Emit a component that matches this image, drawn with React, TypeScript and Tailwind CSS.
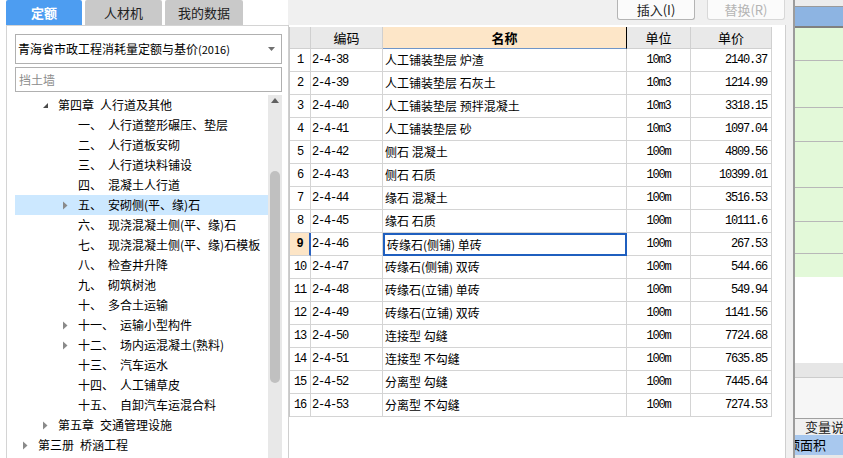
import React from "react";

const cjk = "font-['Noto_Sans_CJK_SC','Noto_Sans',sans-serif]";
const mono = "font-['Liberation_Mono','Noto_Sans_CJK_SC',monospace] tracking-[-1.2px]";

interface TreeNode {
  label: string;
  name?: string;
  level: number;
  arrow?: "open" | "closed";
  selected?: boolean;
}

const tree: TreeNode[] = [
  { label: "第四章", name: "人行道及其他", level: 1, arrow: "open" },
  { label: "一、", name: "人行道整形碾压、垫层", level: 2 },
  { label: "二、", name: "人行道板安砌", level: 2 },
  { label: "三、", name: "人行道块料铺设", level: 2 },
  { label: "四、", name: "混凝土人行道", level: 2 },
  { label: "五、", name: "安砌侧(平、缘)石", level: 2, arrow: "closed", selected: true },
  { label: "六、", name: "现浇混凝土侧(平、缘)石", level: 2 },
  { label: "七、", name: "现浇混凝土侧(平、缘)石模板", level: 2 },
  { label: "八、", name: "检查井升降", level: 2 },
  { label: "九、", name: "砌筑树池", level: 2 },
  { label: "十、", name: "多合土运输", level: 2 },
  { label: "十一、", name: "运输小型构件", level: 2, arrow: "closed" },
  { label: "十二、", name: "场内运混凝土(熟料)", level: 2, arrow: "closed" },
  { label: "十三、", name: "汽车运水", level: 2 },
  { label: "十四、", name: "人工铺草皮", level: 2 },
  { label: "十五、", name: "自卸汽车运混合料", level: 2 },
  { label: "第五章", name: "交通管理设施", level: 1, arrow: "closed" },
  { label: "第三册", name: "桥涵工程", level: 0, arrow: "closed" },
];

const rows: [string, string, string, string][] = [
  ["2-4-38", "人工铺装垫层 炉渣", "10m3", "2140.37"],
  ["2-4-39", "人工铺装垫层 石灰土", "10m3", "1214.99"],
  ["2-4-40", "人工铺装垫层 预拌混凝土", "10m3", "3318.15"],
  ["2-4-41", "人工铺装垫层 砂", "10m3", "1097.04"],
  ["2-4-42", "侧石 混凝土", "100m", "4809.56"],
  ["2-4-43", "侧石 石质", "100m", "10399.01"],
  ["2-4-44", "缘石 混凝土", "100m", "3516.53"],
  ["2-4-45", "缘石 石质", "100m", "10111.6"],
  ["2-4-46", "砖缘石(侧铺) 单砖", "100m", "267.53"],
  ["2-4-47", "砖缘石(侧铺) 双砖", "100m", "544.66"],
  ["2-4-48", "砖缘石(立铺) 单砖", "100m", "549.94"],
  ["2-4-49", "砖缘石(立铺) 双砖", "100m", "1141.56"],
  ["2-4-50", "连接型 勾缝", "100m", "7724.68"],
  ["2-4-51", "连接型 不勾缝", "100m", "7635.85"],
  ["2-4-52", "分离型 勾缝", "100m", "7445.64"],
  ["2-4-53", "分离型 不勾缝", "100m", "7274.53"],
];

function Arrow({ kind }: { kind?: "open" | "closed" }) {
  if (kind === "open")
    return (
      <svg width="7" height="7" viewBox="0 0 7 7">
        <polygon points="6,1 6,6 1,6" fill="#4a4a4a" />
      </svg>
    );
  if (kind === "closed")
    return (
      <svg width="7" height="9" viewBox="0 0 7 9">
        <polygon points="1,0.5 5.5,4.5 1,8.5" fill="#8a8a8a" />
      </svg>
    );
  return null;
}

function TreeRow({ node }: { node: TreeNode }) {
  const indent = [0, 20, 40][node.level];
  return (
    <div className={`h-[20px] flex items-center ${node.selected ? "bg-[#cce8ff]" : ""}`}>
      <div style={{ width: indent }} className="shrink-0" />
      <div className="w-[23px] shrink-0 flex items-center pl-[7px]">
        <Arrow kind={node.arrow} />
      </div>
      <span className="whitespace-nowrap">{node.label}</span>
      <span className="ml-[6px] whitespace-nowrap">{node.name}</span>
    </div>
  );
}

function LeftPanel() {
  return (
    <div className="w-[288px] h-full flex flex-col shrink-0">
      {/* tabs */}
      <div className="h-[25px] flex pl-[6px] gap-[3px] shrink-0">
        <div className="w-[76px] bg-[#4d9df1] text-white font-bold text-[13px] flex items-center justify-center rounded-t-[2px]">定额</div>
        <div className="w-[77px] bg-[#c9c9c9] text-[#222] text-[13px] flex items-center justify-center rounded-t-[2px]">人材机</div>
        <div className="w-[78px] bg-[#c9c9c9] text-[#222] text-[13px] flex items-center justify-center rounded-t-[2px]">我的数据</div>
      </div>
      <div className="flex-1 ml-[6px] border-l border-t border-[#d4d4d4] flex flex-col min-h-0">
        <div className="mt-[8px] ml-[8px] w-[267px] h-[30px] border border-[#b0b0b0] flex items-center pl-[2px] pr-[6px] text-[12px] text-black">
          <span className="flex-1 whitespace-nowrap">青海省市政工程消耗量定额与基价<span className="text-[11px]">(2016)</span></span>
          <svg width="7" height="4" viewBox="0 0 7 4">
            <polygon points="0,0 7,0 3.5,4" fill="#707070" />
          </svg>
        </div>
        <div className="mt-[3px] ml-[8px] w-[267px] h-[25px] border border-[#b0b0b0] flex items-center pl-[3px] text-[12px] text-[#8c8c8c]">挡土墙</div>
        <div className="mt-[3px] flex flex-1 min-h-0 pl-[8px]">
          <div className="w-[253px] text-[12px] text-black">
            {tree.map((n, i) => (
              <TreeRow key={i} node={n} />
            ))}
          </div>
          <div className="w-[14px] bg-[#e8e8e8] flex flex-col items-center">
            <svg width="8" height="6" viewBox="0 0 8 6" className="mt-[3px]">
              <polygon points="4,0 8,5 0,5" fill="#606060" />
            </svg>
            <div className="mt-[67px] w-[10px] h-[212px] rounded-full bg-[#c0c0c0]" />
          </div>
        </div>
      </div>
    </div>
  );
}

const cols = "grid grid-cols-[21px_72px_244px_64px_81px]";

function Table() {
  return (
    <div className="mt-[2px] w-[482px] border-l border-[#c8c8c8] text-[12px] text-black">
      <div className={`${cols} h-[22px] text-[13px]`}>
        <div className="bg-[#e9e9e9] border-r border-b border-[#d0d0d0]" />
        <div className="bg-[#e9e9e9] border-r border-b border-[#d0d0d0] flex items-center justify-center">编码</div>
        <div className="bg-[#fde6c8] border-r border-b border-b-[#6f95c8] flex items-center justify-center font-bold">名称</div>
        <div className="bg-[#e9e9e9] border-r border-b border-[#d0d0d0] flex items-center justify-center">单位</div>
        <div className="bg-[#e9e9e9] border-r border-b border-[#d0d0d0] flex items-center justify-center">单价</div>
      </div>
      {rows.map((r, i) => {
        const sel = i === 8;
        return (
          <div key={i} className={`${cols} h-[23px]`}>
            <div
              className={`border-b border-[#d4d4d4] flex items-center justify-center ${mono} ${
                sel ? "bg-[#fde5c6] font-bold border-r-2 border-r-[#2a62c0]" : "border-r"
              }`}
            >
              {i + 1}
            </div>
            <div className={`border-r border-b border-[#d4d4d4] flex items-center pl-[1px] ${mono}`}>{r[0]}</div>
            <div
              className={`flex items-center pl-[2px] whitespace-nowrap ${
                sel ? "border-2 border-[#1f5fbf]" : "border-r border-b border-[#d4d4d4]"
              }`}
            >
              {r[1]}
            </div>
            <div className={`border-r border-b border-[#d4d4d4] flex items-center justify-center ${mono}`}>{r[2]}</div>
            <div className={`border-r border-b border-[#d4d4d4] flex items-center justify-end pr-[4px] ${mono}`}>{r[3]}</div>
          </div>
        );
      })}
    </div>
  );
}

function MiddlePanel() {
  return (
    <div className="w-[505px] h-full flex flex-col shrink-0">
      <div className="h-[25px] bg-[#f0f0f0] flex justify-end gap-[12px] pr-[8px] shrink-0">
        <div className="w-[78px] h-[20px] bg-[#fbfbfb] border border-t-0 border-[#b4b4b4] rounded-b-[3px] flex items-center justify-center text-[13px] text-[#222]">插入(I)</div>
        <div className="w-[78px] h-[20px] bg-[#fbfbfb] border border-t-0 border-[#d8d8d8] rounded-b-[3px] flex items-center justify-center text-[13px] text-[#b4b4b4]">替换(R)</div>
      </div>
      <div className="flex-1 flex min-h-0">
        <div className="w-[498px] bg-white border-l border-r border-[#cfcfcf]">
          <Table />
        </div>
        <div className="flex-1 bg-[#f0f0f0]" />
      </div>
    </div>
  );
}

function RightPanel() {
  const green = [33, 47, 34, 46, 34, 32, 23];
  return (
    <div className="flex-1 h-full border-l-2 border-[#9c9c9c] flex flex-col overflow-hidden">
      <div className="h-[7px] bg-[#ececec] border-b border-[#9a9a9a] shrink-0" />
      <div className="h-[21px] bg-[#8db4e2] border-b-2 border-[#808080] shrink-0" />
      {green.map((h, i) => (
        <div key={i} style={{ height: h }} className={`bg-[#e3f9d9] shrink-0 ${i < green.length - 1 ? "border-b border-[#b8b8b8]" : ""}`} />
      ))}
      <div className="h-[86px] bg-white shrink-0" />
      <div className="h-[14px] bg-[#e6e6e6] shrink-0" />
      <div className="h-[41px] bg-[#f6f6f6] border-t border-[#cccccc] shrink-0" />
      <div className="h-[17px] bg-[#f0f0f0] border-t border-[#a0a0a0] pl-[10px] text-[13px] text-[#222] flex items-center whitespace-nowrap shrink-0">变量说明</div>
      <div className="h-[20px] bg-[#a8c8ee] text-[13px] text-black flex items-center whitespace-nowrap shrink-0 overflow-hidden">
        <span className="-ml-[8px]">顶面积</span>
      </div>
      <div className="flex-1 bg-[#e8e8e8]" />
    </div>
  );
}

export default function App() {
  return (
    <div className={`w-[843px] h-[458px] flex bg-white overflow-hidden ${cjk}`}>
      <LeftPanel />
      <MiddlePanel />
      <RightPanel />
    </div>
  );
}
